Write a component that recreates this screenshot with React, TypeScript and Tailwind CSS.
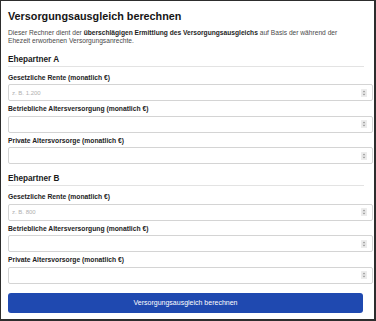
import React from "react";

function Spinner() {
  return (
    <svg width="6" height="8" viewBox="0 0 6 8" className="shrink-0">
      <rect x="0" y="0" width="6" height="8" rx="0.5" fill="#ececec" />
      <path d="M1.5 3.3 L3 1.6 L4.5 3.3 Z" fill="#9a9a9a" />
      <path d="M1.5 4.7 L3 6.4 L4.5 4.7 Z" fill="#9a9a9a" />
    </svg>
  );
}

function Field({ label, placeholder, first, firstGap }: { label: string; placeholder?: string; first?: boolean; firstGap?: string }) {
  return (
    <div className={first ? firstGap : "mt-[4px]"}>
      <div className="text-[6.75px] leading-[8px] font-bold text-[#222] mb-[2.5px] whitespace-nowrap">{label}</div>
      <div className="w-[365px] h-[17px] border border-[#d4d4d4] rounded-[2px] bg-white flex items-center pl-[3px] pr-[5.5px]">
        <input
          type="text"
          placeholder={placeholder}
          className="flex-1 min-w-0 bg-transparent outline-none text-[6px] leading-[8px] text-[#333] placeholder:text-[#b0b0b0] font-['Liberation_Sans',Arial,sans-serif]"
        />
        <Spinner />
      </div>
    </div>
  );
}

function Section({ title, placeholder, gap }: { title: string; placeholder: string; gap: string }) {
  return (
    <>
      <h2 className="mt-[9.3px] text-[8.2px] leading-[10px] font-bold text-[#1a1a1a] pb-[1.5px] border-b border-[#e3e3e3]">
        {title}
      </h2>
      <Field first firstGap={gap} label="Gesetzliche Rente (monatlich €)" placeholder={placeholder} />
      <Field label="Betriebliche Altersversorgung (monatlich €)" />
      <Field label="Private Altersvorsorge (monatlich €)" />
    </>
  );
}

export default function App() {
  return (
    <div className="w-[376px] h-[321px] overflow-hidden bg-white border-l border-t border-r-2 border-b-2 border-[#2d2d2d] pl-[7px] pr-[10px] pt-[9px] font-['Liberation_Sans',Arial,sans-serif]">
      <div className="flex flex-col w-[356px]">
        <h1 className="text-[10.8px] leading-[13px] font-bold text-[#151515] whitespace-nowrap">
          Versorgungsausgleich berechnen
        </h1>
        <p className="mt-[5.5px] w-[348px] text-[6.65px] leading-[8.6px] text-[#4a4a4a]">
          Dieser Rechner dient der{" "}
          <b className="font-bold text-[#1e1e1e]">überschlägigen Ermittlung des Versorgungsausgleichs</b> auf Basis der während der Ehezeit erworbenen Versorgungsanrechte.
        </p>
        <Section title="Ehepartner A" placeholder="z. B. 1.200" gap="mt-[6.5px]" />
        <Section title="Ehepartner B" placeholder="z. B. 800" gap="mt-[7px]" />
        <button
          type="button"
          className="mt-[9px] h-[20.5px] w-[355px] rounded-[3px] bg-[#1f49b0] text-white text-[7px] leading-[8px] flex items-center justify-center"
        >
          Versorgungsausgleich berechnen
        </button>
      </div>
    </div>
  );
}
